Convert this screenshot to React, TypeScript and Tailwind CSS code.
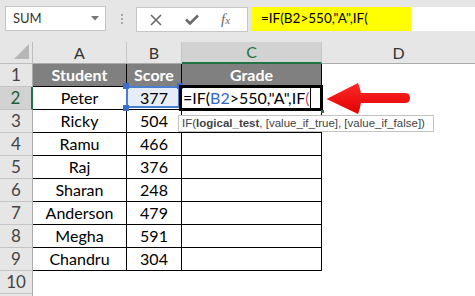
import React from "react";

const rows: string[][] = [
  ["Student", "Score", "Grade"],
  ["Peter", "377", ""],
  ["Ricky", "504", ""],
  ["Ramu", "466", ""],
  ["Raj", "376", ""],
  ["Sharan", "248", ""],
  ["Anderson", "479", ""],
  ["Megha", "591", ""],
  ["Chandru", "304", ""],
];

function TopBar() {
  return (
    <div className="h-[42px] bg-[#e6e6e6] flex items-start">
      <div className="ml-[5px] mt-[6px] w-[101px] h-[25px] bg-white border border-[#c6c6c6] flex items-center justify-between pl-[7px] pr-[6px]">
        <span className="text-[13px] text-[#333] leading-none">SUM</span>
        <svg width="8" height="5" viewBox="0 0 8 5">
          <polygon points="0,0 8,0 4,4.5" fill="#777" />
        </svg>
      </div>
      <div className="ml-[15px] mt-[14px] flex flex-col gap-[2px]">
        <div className="w-[2px] h-[2px] bg-[#a8a8a8]" />
        <div className="w-[2px] h-[2px] bg-[#a8a8a8]" />
        <div className="w-[2px] h-[2px] bg-[#a8a8a8]" />
      </div>
      <div className="ml-[13px] mt-[7px] w-[112px] h-[25px] bg-white border border-[#c6c6c6] flex items-center">
        <svg className="ml-[13px]" width="12" height="12" viewBox="0 0 12 12">
          <path d="M1 1 L11 11 M11 1 L1 11" stroke="#6a6a6a" strokeWidth="1.6" />
        </svg>
        <svg className="ml-[23px]" width="14" height="11" viewBox="0 0 14 11">
          <path d="M1 5.5 L5 9.5 L13 1.5" stroke="#6a6a6a" strokeWidth="2.6" fill="none" />
        </svg>
        <span className="ml-[22px] font-['Liberation_Serif',serif] italic text-[15px] text-[#6a6a6a] leading-none">
          f<span className="text-[11px]">x</span>
        </span>
      </div>
      <div className="ml-[3px] mt-[7px] flex-1 h-[24px] bg-white flex items-stretch">
        <div className="w-[160px] bg-[#ffff00] flex items-center pl-[10px] text-[13.5px] text-black leading-none">
          =IF(B2&gt;550,"A",IF(
        </div>
      </div>
    </div>
  );
}

export default function App() {
  const rowHeader = (n: number, label: boolean = true) => {
    const active = n === 2;
    return (
      <div
        key={"rh" + n}
        className={
          active
            ? "bg-[#d2d2d2] border-b border-[#c4c4c4] border-r-2 border-r-[#217346] flex items-center justify-center text-[17px] text-[#1f5e3a]"
            : "bg-[#e6e6e6] border-b border-[#c4c4c4] border-r border-r-[#ababab] flex items-center justify-center text-[17px] text-[#444]"
        }
      >
        {label ? n : null}
      </div>
    );
  };

  const cells: React.ReactNode[] = [];
  cells.push(
    <div key="corner" className="relative bg-[#e6e6e6] border-r border-b border-[#bdbdbd]">
      <svg className="absolute right-[3px] bottom-[4px]" width="15" height="15" viewBox="0 0 15 15">
        <polygon points="15,0 15,15 0,15" fill="#b7b7b7" />
      </svg>
    </div>
  );
  ["A", "B"].forEach((c) =>
    cells.push(
      <div key={"ch" + c} className="bg-[#e6e6e6] border-r border-r-[#c6c6c6] border-b border-b-[#ababab] flex items-center justify-center text-[16px] text-[#333]">
        {c}
      </div>
    )
  );
  cells.push(
    <div key="chC" className="bg-[#d2d2d2] border-r border-r-[#c6c6c6] border-b-2 border-b-[#217346] flex items-center justify-center text-[16px] text-[#217346]">
      C
    </div>
  );
  cells.push(
    <div key="chD" className="bg-[#e6e6e6] border-b border-b-[#ababab] flex items-center justify-center text-[16px] text-[#333]">
      D
    </div>
  );

  rows.forEach((r, i) => {
    const n = i + 1;
    cells.push(rowHeader(n));
    r.forEach((v, j) => {
      const key = "c" + n + "-" + j;
      if (n === 1) {
        cells.push(
          <div key={key} className="bg-[#808080] border-r border-b border-black flex items-center justify-center text-white font-bold text-[16px]">
            {v}
          </div>
        );
      } else if (n === 2 && j === 1) {
        cells.push(
          <div key={key} className="relative border-r border-b border-black flex items-center justify-center text-[16px] text-black">
            <div className="absolute left-[-1px] top-[-1px] right-[1px] bottom-[1px] border-2 border-[#4a7fd0] bg-[#e6edf8]" />
            <span className="relative">{v}</span>
            <div className="absolute left-[-4px] top-[-4px] w-[6px] h-[6px] bg-[#3a6fcb]" />
            <div className="absolute left-[-4px] bottom-[-2px] w-[6px] h-[6px] bg-[#3a6fcb]" />
            <div className="absolute right-[-2px] top-[-4px] w-[6px] h-[6px] bg-[#3a6fcb]" />
          </div>
        );
      } else if (n === 2 && j === 2) {
        cells.push(
          <div key={key} className="relative border-r border-b border-black flex items-center text-[16px] text-black">
            <span className="pl-[1px] whitespace-nowrap">
              =IF(<span className="text-[#3366cc]">B2</span>&gt;550,"A",IF<span className="text-[#c0506a]">(</span>
            </span>
            <div className="absolute left-[128px] top-[1px] w-[1px] h-[20px] bg-black" />
            <div className="absolute left-[-3px] top-[-2px] right-[-2px] bottom-[-2px] border-[3px] border-black" />
            <div className="absolute right-[-3px] bottom-[-4px] w-[3px] h-[3px] bg-[#217346]" />
          </div>
        );
      } else {
        cells.push(
          <div key={key} className="border-r border-b border-black flex items-center justify-center text-[16px] text-black">
            {v}
          </div>
        );
      }
    });
    cells.push(<div key={"d" + n} className="bg-white" />);
  });

  cells.push(rowHeader(10));
  cells.push(<div key="r10a" />, <div key="r10b" />, <div key="r10c" />, <div key="r10d" />);
  cells.push(rowHeader(11, false));

  return (
    <div className="relative w-[475px] h-[296px] overflow-hidden bg-white font-['Lato',sans-serif]">
      <TopBar />
      <div className="grid grid-cols-[33px_94px_55px_140px_153px] grid-rows-[22px_repeat(11,23px)]">
        {cells}
      </div>

      <div className="absolute left-[178px] top-[115px] w-[256px] h-[17px] bg-white border border-[#c3c3c3] flex items-center pl-[3px] font-['Liberation_Sans',sans-serif] text-[11.5px] text-[#444] whitespace-nowrap leading-none">
        IF(<span className="font-bold">logical_test</span>, [value_if_true], [value_if_false])
      </div>

      <svg className="absolute left-[325px] top-[82px]" width="90" height="34" viewBox="0 0 90 34">
        <defs>
          <linearGradient id="rg" x1="0" y1="0" x2="0" y2="1">
            <stop offset="0" stopColor="#ff2a2a" />
            <stop offset="1" stopColor="#e00000" />
          </linearGradient>
        </defs>
        <path
          d="M1.5 17 L33 1 Q35 6 36 11 L80 11 Q85 11 85 16 Q85 21 80 21 L36 21 Q35 27 33 32 Z"
          fill="url(#rg)"
        />
      </svg>
    </div>
  );
}
